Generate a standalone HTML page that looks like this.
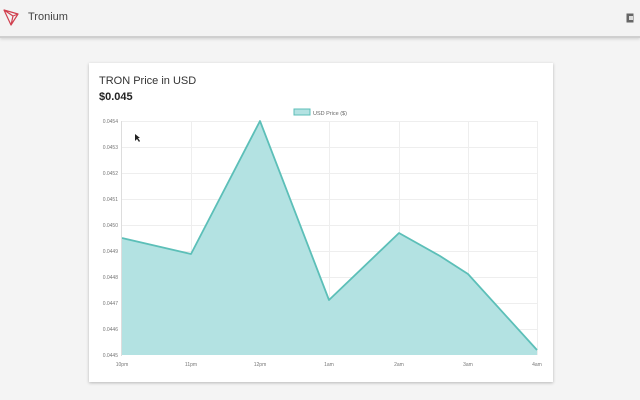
<!DOCTYPE html>
<html><head><meta charset="utf-8"><style>
html,body{margin:0;padding:0;width:640px;height:400px;overflow:hidden;background:#f4f4f4;font-family:"Liberation Sans",sans-serif;}
.hdr{position:absolute;left:0;top:0;width:640px;height:36px;background:#f3f3f3;border-bottom:2px solid #cfcfcf;box-shadow:0 1px 3px rgba(0,0,0,.15);}
.hdr .t{position:absolute;left:28px;top:11px;font-size:11px;color:#444;}
.card{position:absolute;left:89px;top:63px;width:464px;height:319px;background:#fff;box-shadow:0 1px 3px rgba(0,0,0,.25);}
.h1{position:absolute;left:10px;top:12px;font-size:11px;color:#333;}
.h2{position:absolute;left:10px;top:28px;font-size:11px;font-weight:bold;color:#222;}
</style></head><body>
<div class="hdr">
<svg style="position:absolute;left:3px;top:8px" width="17" height="19" viewBox="0 0 17 19"><path d="M1 2 L15 6 L8 17 Z M1 2 L10 8 L8 17 M10 8 L15 6" fill="none" stroke="#d0404f" stroke-width="1.2" stroke-linejoin="round"/></svg>
<div class="t">Tronium</div>
<svg style="position:absolute;left:626px;top:13px" width="8" height="10" viewBox="0 0 8 10"><rect x="0.5" y="0.5" width="7" height="9" fill="#666"/><rect x="3" y="3" width="4" height="4" fill="#ddd"/></svg>
</div>
<div class="card">
<div class="h1">TRON Price in USD</div>
<div class="h2">$0.045</div>
</div>
<svg style="position:absolute;left:0;top:0" width="640" height="400">
<g stroke="#eee" stroke-width="1">
<line x1="122" y1="121.5" x2="538" y2="121.5"/><line x1="122" y1="147.5" x2="538" y2="147.5"/><line x1="122" y1="173.5" x2="538" y2="173.5"/><line x1="122" y1="199.5" x2="538" y2="199.5"/><line x1="122" y1="225.5" x2="538" y2="225.5"/><line x1="122" y1="251.5" x2="538" y2="251.5"/><line x1="122" y1="277.5" x2="538" y2="277.5"/><line x1="122" y1="303.5" x2="538" y2="303.5"/><line x1="122" y1="329.5" x2="538" y2="329.5"/>
<line x1="191.5" y1="121" x2="191.5" y2="355"/><line x1="260.5" y1="121" x2="260.5" y2="355"/><line x1="329.5" y1="121" x2="329.5" y2="355"/><line x1="399.5" y1="121" x2="399.5" y2="355"/><line x1="468.5" y1="121" x2="468.5" y2="355"/><line x1="537.5" y1="121" x2="537.5" y2="355"/>
</g>
<path d="M122 238 L191 254 L260 121 L329 300 L399 233 L440 256 L468 274 L537 350 L537 355 L122 355 Z" fill="#b3e2e2"/>
<path d="M122 238 L191 254 L260 121 L329 300 L399 233 L440 256 L468 274 L537 350" fill="none" stroke="#5cbfb8" stroke-width="1.8" stroke-linejoin="round"/>
<line x1="121.5" y1="121" x2="121.5" y2="356" stroke="#ddd"/>
<rect x="294" y="109" width="16" height="6" fill="#b3e2e2" stroke="#5cbfb8"/>
<text x="313" y="115" font-size="5.5" fill="#666" font-family="Liberation Sans">USD Price ($)</text>
<g font-size="5" fill="#777" font-family="Liberation Sans" text-anchor="end">
<text x="118" y="123">0.0454</text><text x="118" y="149">0.0453</text><text x="118" y="175">0.0452</text><text x="118" y="201">0.0451</text><text x="118" y="227">0.0450</text><text x="118" y="253">0.0449</text><text x="118" y="279">0.0448</text><text x="118" y="305">0.0447</text><text x="118" y="331">0.0446</text><text x="118" y="357">0.0445</text>
</g>
<g font-size="5" fill="#777" font-family="Liberation Sans" text-anchor="middle">
<text x="122" y="366">10pm</text><text x="191" y="366">11pm</text><text x="260" y="366">12pm</text><text x="329" y="366">1am</text><text x="399" y="366">2am</text><text x="468" y="366">3am</text><text x="537" y="366">4am</text>
</g>
<path d="M135 134 L135 141 L137 139 L139 142 L140 141 L138 138 L140 138 Z" fill="#222"/>
</svg>
</body></html>
